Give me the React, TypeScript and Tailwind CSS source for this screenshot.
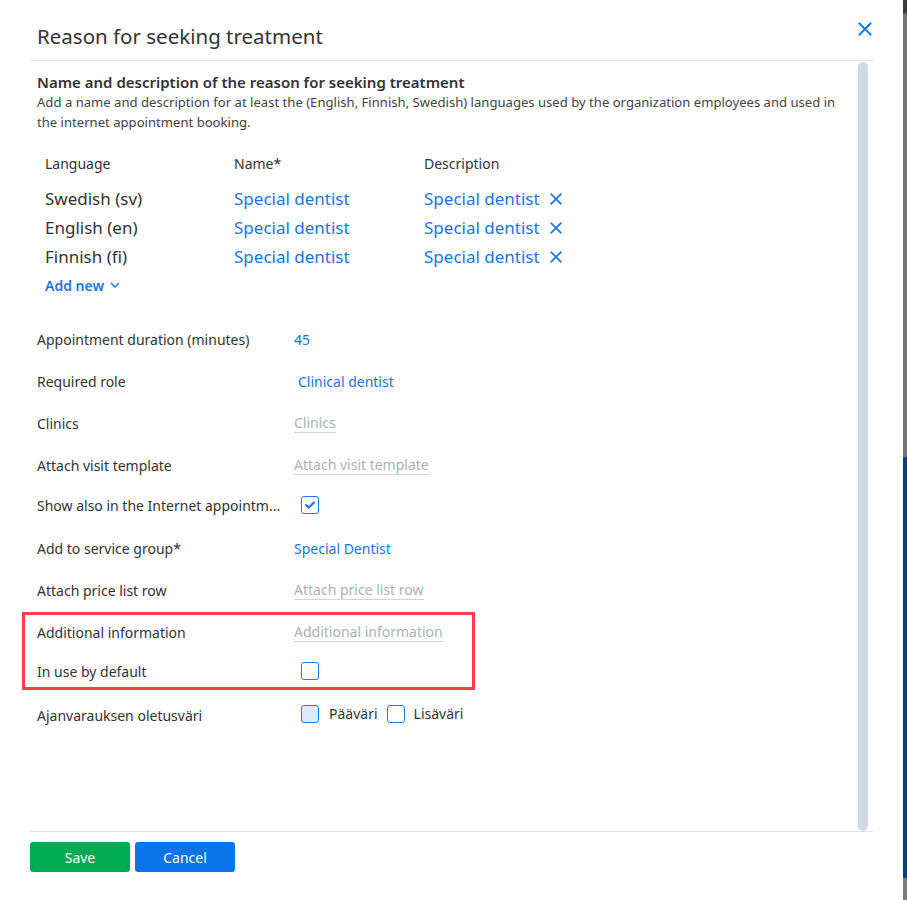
import React from 'react';

const font = { fontFamily: '"Noto Sans", "Open Sans", Arial, sans-serif' };

function CloseIcon({ className }: { className?: string }) {
  return (
    <svg viewBox="0 0 14 14" className={className} fill="none" stroke="currentColor" strokeWidth="2" strokeLinecap="square">
      <path d="M1.5 1.5 L12.5 12.5 M12.5 1.5 L1.5 12.5" />
    </svg>
  );
}

function Checkbox({ checked = false, tint = false }: { checked?: boolean; tint?: boolean }) {
  return (
    <span
      className={`flex h-[18px] w-[18px] items-center justify-center rounded-[3px] border-[1.5px] border-[#1a7ee6] ${
        tint ? 'bg-[#dcebf6]' : 'bg-white'
      }`}
    >
      {checked && (
        <svg viewBox="0 0 14 14" className="h-[12px] w-[12px]" fill="none" stroke="#1a7ee6" strokeWidth="2.6" strokeLinecap="round" strokeLinejoin="round">
          <path d="M2.5 7.2 L5.6 10 L11.5 4.2" />
        </svg>
      )}
    </span>
  );
}

function Placeholder({ children }: { children: React.ReactNode }) {
  return <span className="border-b border-[#cfd5db] leading-[18px] text-[#a9b1b9]">{children}</span>;
}

function FormRow({ label, h, children, extra = '' }: { label: string; h: string; children?: React.ReactNode; extra?: string }) {
  return (
    <div className={`flex items-center ${h} ${extra}`}>
      <div className="w-[257px] shrink-0 whitespace-nowrap pr-[8px] text-[14px] text-[#333]">{label}</div>
      <div className="flex items-center text-[14px]">{children}</div>
    </div>
  );
}

const langs = ['Swedish (sv)', 'English (en)', 'Finnish (fi)'];

export default function App() {
  return (
    <div className="flex h-[900px] w-[907px] bg-white" style={font}>
      <div className="flex w-[903px] shrink-0 flex-col bg-white">
        {/* header */}
        <div className="mx-[30px] flex h-[61px] shrink-0 items-start justify-between border-b border-[#dde1e5] pl-[7px]">
          <h1 className="mt-[22px] text-[20.5px] font-normal leading-[28px] text-[#333]">Reason for seeking treatment</h1>
          <button className="mr-[1px] mt-[22px] text-[#1a7ee6]">
            <CloseIcon className="h-[14px] w-[14px]" />
          </button>
        </div>

        {/* body */}
        <div className="ml-[30px] mr-[35px] flex h-[770px] shrink-0">
          <div className="flex-1 pl-[7px] pt-[11px]">
            <div className="text-[15px] font-semibold leading-[20px] text-[#333]">
              Name and description of the reason for seeking treatment
            </div>
            <p className="pr-[12px] text-[13.1px] leading-[20px] text-[#444]">
              Add a name and description for at least the (English, Finnish, Swedish) languages used by the organization employees and used in the internet appointment booking.
            </p>

            <div className="mt-[21px] pl-[8px]">
              <div className="flex h-[20px] items-center text-[14px] text-[#333]">
                <div className="w-[189px]">Language</div>
                <div className="w-[190px]">Name*</div>
                <div>Description</div>
              </div>
              <div className="mt-[11px]">
                {langs.map((l) => (
                  <div key={l} className="flex h-[29px] items-center text-[17px]">
                    <div className="w-[189px] text-[#333]">{l}</div>
                    <div className="w-[190px] text-[#1b74e4]">Special dentist</div>
                    <div className="flex items-center gap-[10px] text-[#1b74e4]">
                      Special dentist
                      <CloseIcon className="h-[12px] w-[12px]" />
                    </div>
                  </div>
                ))}
              </div>
              <div className="mt-[4px] flex h-[20px] items-center gap-[6px] text-[14px] font-semibold text-[#1b74e4]">
                Add new
                <svg viewBox="0 0 10 6" className="h-[6px] w-[10px]" fill="none" stroke="currentColor" strokeWidth="1.4">
                  <path d="M1 1 L5 5 L9 1" />
                </svg>
              </div>
            </div>

            <div className="mt-[23px]">
              <FormRow label="Appointment duration (minutes)" h="h-[42px]">
                <span className="text-[#1b74e4]">45</span>
              </FormRow>
              <FormRow label="Required role" h="h-[42px]">
                <span className="pl-[4px] text-[#1b74e4]">Clinical dentist</span>
              </FormRow>
              <FormRow label="Clinics" h="h-[42px]">
                <Placeholder>Clinics</Placeholder>
              </FormRow>
              <FormRow label="Attach visit template" h="h-[42px]">
                <Placeholder>Attach visit template</Placeholder>
              </FormRow>
              <FormRow label="Show also in the Internet appointm..." h="h-[38px]">
                <span className="pl-[7px]">
                  <Checkbox checked />
                </span>
              </FormRow>
              <FormRow label="Add to service group*" h="h-[48px]">
                <span className="text-[#1b74e4]">Special Dentist</span>
              </FormRow>
              <FormRow label="Attach price list row" h="h-[36px]">
                <Placeholder>Attach price list row</Placeholder>
              </FormRow>

              <div className="-ml-[15px] mt-[4px] w-[453px] border-[3px] border-[#fa3f45] pl-[12px]">
                <FormRow label="Additional information" h="h-[35px]">
                  <Placeholder>Additional information</Placeholder>
                </FormRow>
                <FormRow label="In use by default" h="h-[37px]" extra="pt-[5px]">
                  <span className="pl-[7px]">
                    <Checkbox />
                  </span>
                </FormRow>
              </div>

              <FormRow label="Ajanvarauksen oletusväri" h="h-[50px]">
                <span className="flex items-center gap-[10px] pb-[3px] pl-[7px] text-[#333]">
                  <Checkbox tint />
                  <span className="-mr-[1px]">Pääväri</span>
                  <Checkbox />
                  <span className="-ml-[1px]">Lisäväri</span>
                </span>
              </FormRow>
            </div>
          </div>
          <div className="mt-[1px] w-[10px] shrink-0 rounded-full bg-[#d3dae1]" />
        </div>

        {/* footer */}
        <div className="mx-[30px] flex shrink-0 gap-[5px] border-t border-[#dde1e5] pt-[10px]">
          <button className="h-[30px] w-[100px] rounded-[3px] bg-[#00aa52] text-[14px] text-white">Save</button>
          <button className="h-[30px] w-[100px] rounded-[3px] bg-[#0b74e8] text-[14px] text-white">Cancel</button>
        </div>
      </div>

      {/* backdrop edge */}
      <div className="flex w-[4px] flex-col">
        <div className="h-[12px] bg-[#3b3b3b]" />
        <div className="h-[2px] bg-[#8a3045]" />
        <div className="h-[443px] bg-[#757575]" />
        <div className="h-[421px] bg-[#0b3f7d]" />
        <div className="flex-1 bg-[#7d7d7d]" />
      </div>
    </div>
  );
}
